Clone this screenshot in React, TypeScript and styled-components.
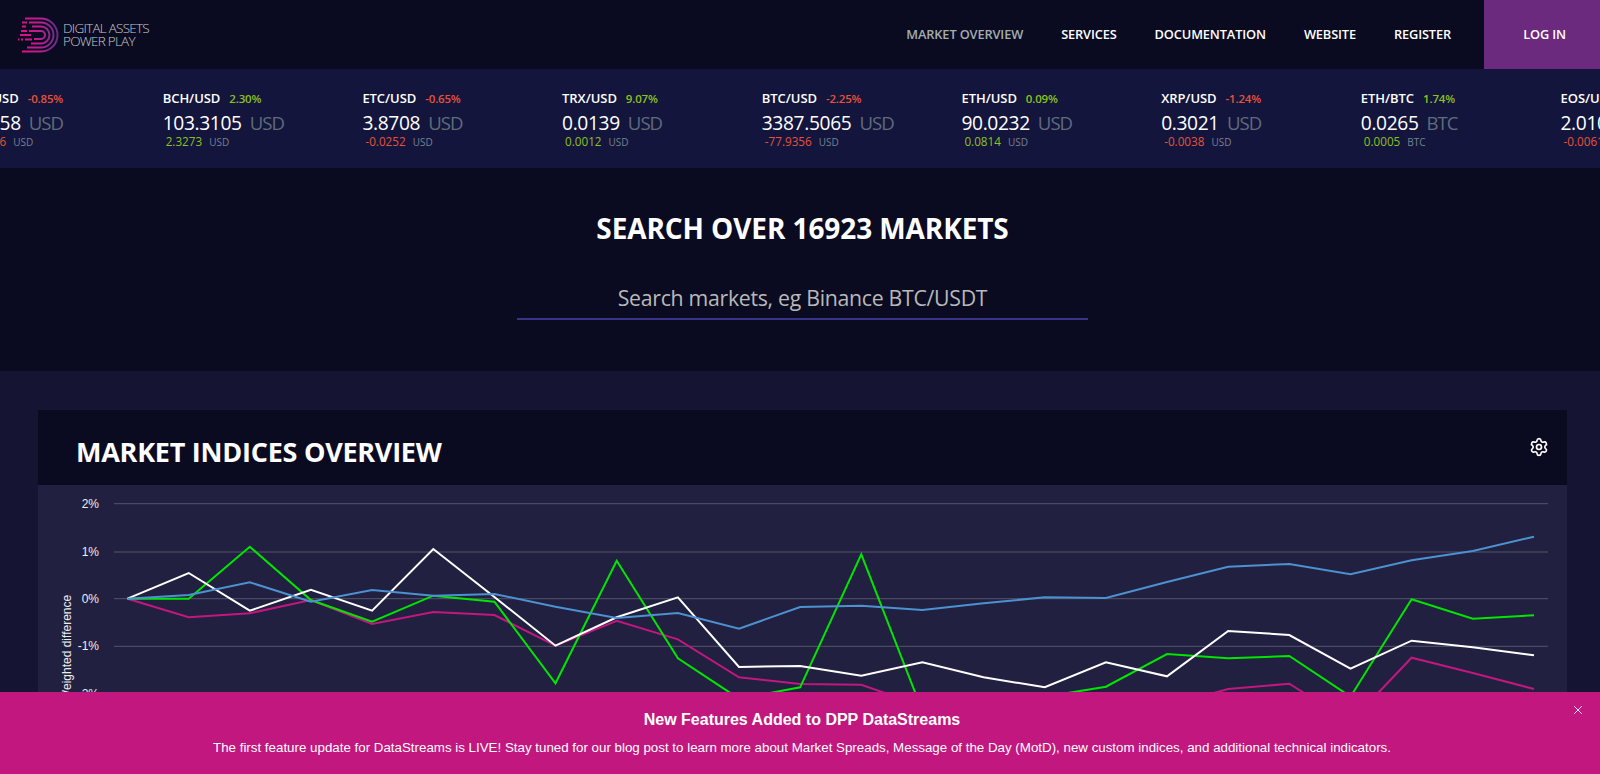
import React from "react";
import styled, { createGlobalStyle } from "styled-components";
import { Settings, X } from "lucide-react";

const Global = createGlobalStyle`
  html, body { margin: 0; padding: 0; height: 100%; overflow: hidden; background: #151533; }
  body { font-family: "Open Sans", "Noto Sans", sans-serif; color: #fff; }
  * { box-sizing: border-box; }
`;

const Page = styled.div`
  display: flex;
  flex-direction: column;
  height: 774px;
  overflow: hidden;
`;

const Header = styled.header`
  display: flex;
  align-items: stretch;
  justify-content: space-between;
  height: 69px;
  flex: none;
  background: #0a0b21;
`;

const Brand = styled.div`
  display: flex;
  align-items: center;
  gap: 4px;
  padding-left: 18px;
`;

const BrandText = styled.div`
  font-size: 13.5px;
  line-height: 13px;
  font-weight: 300;
  color: #c8cacd;
  letter-spacing: -0.75px;
`;

const Nav = styled.nav`
  display: flex;
  align-items: stretch;
`;

const NavLink = styled.a<{ $active?: boolean }>`
  display: flex;
  align-items: center;
  margin-right: 38px;
  padding-bottom: 2px;
  font-size: 12.8px;
  font-weight: 600;
  letter-spacing: -0.13px;
  color: ${(p) => (p.$active ? "#a3adb0" : "#ffffff")};
`;

const LoginButton = styled.a`
  display: flex;
  align-items: center;
  justify-content: center;
  width: 116px;
  margin-left: -5px;
  padding: 0 0 2px 5px;
  background: #6b2a7d;
  font-size: 12.8px;
  font-weight: 600;
  letter-spacing: -0.15px;
  color: #fff;
`;

const Ticker = styled.div`
  display: flex;
  flex: none;
  height: 99px;
  background: #13153c;
  overflow: hidden;
`;

const TickerTrack = styled.div`
  display: flex;
  flex: none;
  margin-left: -37px;
`;

const TickerItem = styled.div`
  flex: none;
  width: 199.7px;
  padding-top: 20px;
`;

const PairRow = styled.div`
  display: flex;
  align-items: baseline;
  gap: 9px;
  height: 18px;
  white-space: nowrap;
`;

const Pair = styled.span`
  font-size: 13px;
  font-weight: 600;
  letter-spacing: -0.05px;
`;

const Pct = styled.span<{ $up: boolean }>`
  font-size: 11.5px;
  font-weight: 600;
  letter-spacing: -0.2px;
  color: ${(p) => (p.$up ? "#8cc11f" : "#e5533a")};
`;

const PriceRow = styled.div`
  display: flex;
  align-items: baseline;
  gap: 8px;
  height: 27px;
  margin-top: 2px;
  font-size: 19.2px;
  line-height: 27px;
  white-space: nowrap;
  letter-spacing: -0.35px;
`;

const Unit = styled.span`
  color: #5f6c7b;
  font-size: 18.6px;
  letter-spacing: -1px;
`;

const ChangeRow = styled.div`
  display: flex;
  align-items: baseline;
  gap: 7px;
  padding-left: 3px;
  margin-top: -3px;
  font-size: 11.7px;
  white-space: nowrap;
`;

const Change = styled.span<{ $up: boolean }>`
  color: ${(p) => (p.$up ? "#8cc11f" : "#e5533a")};
`;

const SmallUnit = styled.span`
  font-size: 10px;
  color: #77818f;
`;

const SearchSection = styled.section`
  display: flex;
  flex-direction: column;
  align-items: center;
  flex: none;
  height: 203px;
  padding: 41px 0 0 5px;
  background: #0a0b21;
`;

const SearchTitle = styled.h2`
  margin: 0;
  font-size: 28px;
  line-height: 38px;
  font-weight: 700;
  letter-spacing: -0.1px;
  color: #fff;
`;

const SearchInput = styled.input`
  display: block;
  width: 571px;
  height: 46px;
  margin-top: 27px;
  padding: 2px 0 0;
  border: 0;
  border-bottom: 2px solid #3a3488;
  outline: none;
  background: transparent;
  text-align: center;
  font-family: inherit;
  font-size: 21.3px;
  letter-spacing: -0.3px;
  color: #b9b9b9;
  &::placeholder { color: #b9b9b9; opacity: 1; }
`;

const Main = styled.main`
  flex: 1;
  padding: 39px 33px 0 38px;
  background: #151533;
`;

const Panel = styled.section`
  background: #212040;
`;

const PanelHeader = styled.div`
  display: flex;
  align-items: flex-start;
  justify-content: space-between;
  height: 75px;
  padding: 23px 18px 0 38px;
  background: #0a0b21;
`;

const PanelTitle = styled.h1`
  margin: 0;
  font-size: 27px;
  line-height: 37px;
  font-weight: 700;
  letter-spacing: -0.25px;
  color: #fff;
`;

const GearButton = styled.span`
  display: flex;
  margin-top: 4px;
  color: #fff;
`;

const ChartFrame = styled.div`
  display: block;
  height: 400px;
`;

const ChartSvg = styled.svg`
  display: block;
`;

const AxisText = styled.text`
  font-family: "Liberation Sans", Arial, sans-serif;
  font-size: 12px;
  fill: #eeeeee;
`;

const Banner = styled.aside`
  position: fixed;
  left: 0;
  right: 0;
  bottom: 0;
  height: 82px;
  padding: 18px 0 0 4px;
  background: #c2177f;
  text-align: center;
  font-family: "Liberation Sans", Arial, sans-serif;
  color: #fff;
`;

const BannerTitle = styled.div`
  font-size: 16px;
  line-height: 20px;
  font-weight: 700;
`;

const BannerText = styled.div`
  margin-top: 9px;
  font-size: 13.33px;
  line-height: 18px;
`;

const CloseButton = styled.span`
  position: absolute;
  top: 11px;
  right: 15px;
  display: flex;
  color: #fff;
`;

type T = { pair: string; pct: string; price: string; unit: string; change: string };
const tickers: T[] = [
  { pair: "EOS/USD", pct: "-0.85%", price: "2.0158", unit: "USD", change: "-0.0026" },
  { pair: "BCH/USD", pct: "2.30%", price: "103.3105", unit: "USD", change: "2.3273" },
  { pair: "ETC/USD", pct: "-0.65%", price: "3.8708", unit: "USD", change: "-0.0252" },
  { pair: "TRX/USD", pct: "9.07%", price: "0.0139", unit: "USD", change: "0.0012" },
  { pair: "BTC/USD", pct: "-2.25%", price: "3387.5065", unit: "USD", change: "-77.9356" },
  { pair: "ETH/USD", pct: "0.09%", price: "90.0232", unit: "USD", change: "0.0814" },
  { pair: "XRP/USD", pct: "-1.24%", price: "0.3021", unit: "USD", change: "-0.0038" },
  { pair: "ETH/BTC", pct: "1.74%", price: "0.0265", unit: "BTC", change: "0.0005" },
  { pair: "EOS/USD", pct: "-0.30%", price: "2.0106", unit: "USD", change: "-0.0061" },
];

const X0 = 127.5 - 38;
const DX = 61.15;
const TOP = 485;
const LEFT = 38;
const series: { color: string; ys: number[] }[] = [
  { color: "#c2177f", ys: [598.7,617.3,613.3,600,624,612,615,645.7,620.7,639.3,677.3,684,684.7,706,712,712,708,706,689,683.7,722,657.7,673,689] },
  { color: "#00e600", ys: [598.7,598.7,546.7,600,621.7,595.7,601.7,683.3,560.7,658.3,698.7,687.3,554.3,711,715,696.7,686.7,654,658.3,656,696.7,599.3,618.7,615.3] },
  { color: "#ffffff", ys: [598.7,573,610.7,589.7,610.7,549,597,645.7,617.3,597.3,667,666,675.7,662.3,677.3,687.3,662.3,676.3,631,635,668.7,640.7,647.3,655.3] },
  { color: "#4c91d0", ys: [598.7,595,582.3,601.7,590,595.7,594,606.7,618,613,628.7,607,605.7,610,603.3,597.3,598,582,566.7,564,574.3,560.3,551,536.7] },
];
const ticks: [string, number][] = [["2%", 503.7], ["1%", 552], ["0%", 598.7], ["-1%", 646.3], ["-2%", 694]];

function Logo() {
  return (
    <svg width="41" height="36" viewBox="0 0 41 36" fill="none">
      <defs>
        <linearGradient id="lg" x1="6" y1="0" x2="40" y2="0" gradientUnits="userSpaceOnUse">
          <stop offset="0" stopColor="#d9128c" />
          <stop offset="0.5" stopColor="#b81f90" />
          <stop offset="1" stopColor="#5e2f8a" />
        </linearGradient>
      </defs>
      <g stroke="url(#lg)" strokeWidth="2">
        <path d="M7 1.5H23a16 16 0 0 1 0 33H4" />
        <path d="M11 5.5H23a12 12 0 0 1 0 25H9" />
        <path d="M14 9.5H23a8.3 8.3 0 0 1 0 17H13" />
        <path d="M11 14H23a4 4 0 0 1 0 8H16" />
      </g>
      <g stroke="#d9128c" strokeWidth="2">
        <path d="M4 5.5H9M3 14H9M2 18H13M0 22.5H1.5M3 22.5H5M7 22.5H14M4 9.5H8" />
      </g>
    </svg>
  );
}

export default function App() {
  return (
    <Page>
      <Global />
      <Header>
        <Brand>
          <Logo />
          <BrandText>DIGITAL ASSETS<br />POWER PLAY</BrandText>
        </Brand>
        <Nav>
          <NavLink $active>MARKET OVERVIEW</NavLink>
          <NavLink>SERVICES</NavLink>
          <NavLink>DOCUMENTATION</NavLink>
          <NavLink>WEBSITE</NavLink>
          <NavLink>REGISTER</NavLink>
          <LoginButton>LOG IN</LoginButton>
        </Nav>
      </Header>
      <Ticker>
        <TickerTrack>
          {tickers.map((t, i) => {
            const up = !t.pct.startsWith("-");
            return (
              <TickerItem key={i}>
                <PairRow><Pair>{t.pair}</Pair><Pct $up={up}>{t.pct}</Pct></PairRow>
                <PriceRow><span>{t.price}</span><Unit>{t.unit}</Unit></PriceRow>
                <ChangeRow><Change $up={up}>{t.change}</Change><SmallUnit>{t.unit}</SmallUnit></ChangeRow>
              </TickerItem>
            );
          })}
        </TickerTrack>
      </Ticker>
      <SearchSection>
        <SearchTitle>SEARCH OVER 16923 MARKETS</SearchTitle>
        <SearchInput placeholder="Search markets, eg Binance BTC/USDT" />
      </SearchSection>
      <Main>
        <Panel>
          <PanelHeader>
            <PanelTitle>MARKET INDICES OVERVIEW</PanelTitle>
            <GearButton><Settings size={20} strokeWidth={2} /></GearButton>
          </PanelHeader>
          <ChartFrame>
            <ChartSvg width="1529" height="400" viewBox="0 0 1529 400">
              {ticks.map(([label, y]) => (
                <g key={label}>
                  <line x1={114 - LEFT} x2={1548 - LEFT} y1={y - TOP} y2={y - TOP} stroke="#55546b" strokeWidth="1" />
                  <AxisText x={99 - LEFT} y={y - TOP + 4} textAnchor="end">{label}</AxisText>
                </g>
              ))}
              <AxisText transform={`translate(${71 - LEFT} ${648 - TOP}) rotate(-90)`} textAnchor="middle">Weighted difference</AxisText>
              {series.map((s) => (
                <polyline
                  key={s.color}
                  fill="none"
                  stroke={s.color}
                  strokeWidth="2"
                  strokeLinejoin="miter"
                  points={s.ys.map((y, i) => `${(X0 + DX * i).toFixed(1)},${(y - TOP).toFixed(1)}`).join(" ")}
                />
              ))}
            </ChartSvg>
          </ChartFrame>
        </Panel>
      </Main>
      <Banner>
        <BannerTitle>New Features Added to DPP DataStreams</BannerTitle>
        <BannerText>The first feature update for DataStreams is LIVE! Stay tuned for our blog post to learn more about Market Spreads, Message of the Day (MotD), new custom indices, and additional technical indicators.</BannerText>
        <CloseButton><X size={14} strokeWidth={1.5} /></CloseButton>
      </Banner>
    </Page>
  );
}
